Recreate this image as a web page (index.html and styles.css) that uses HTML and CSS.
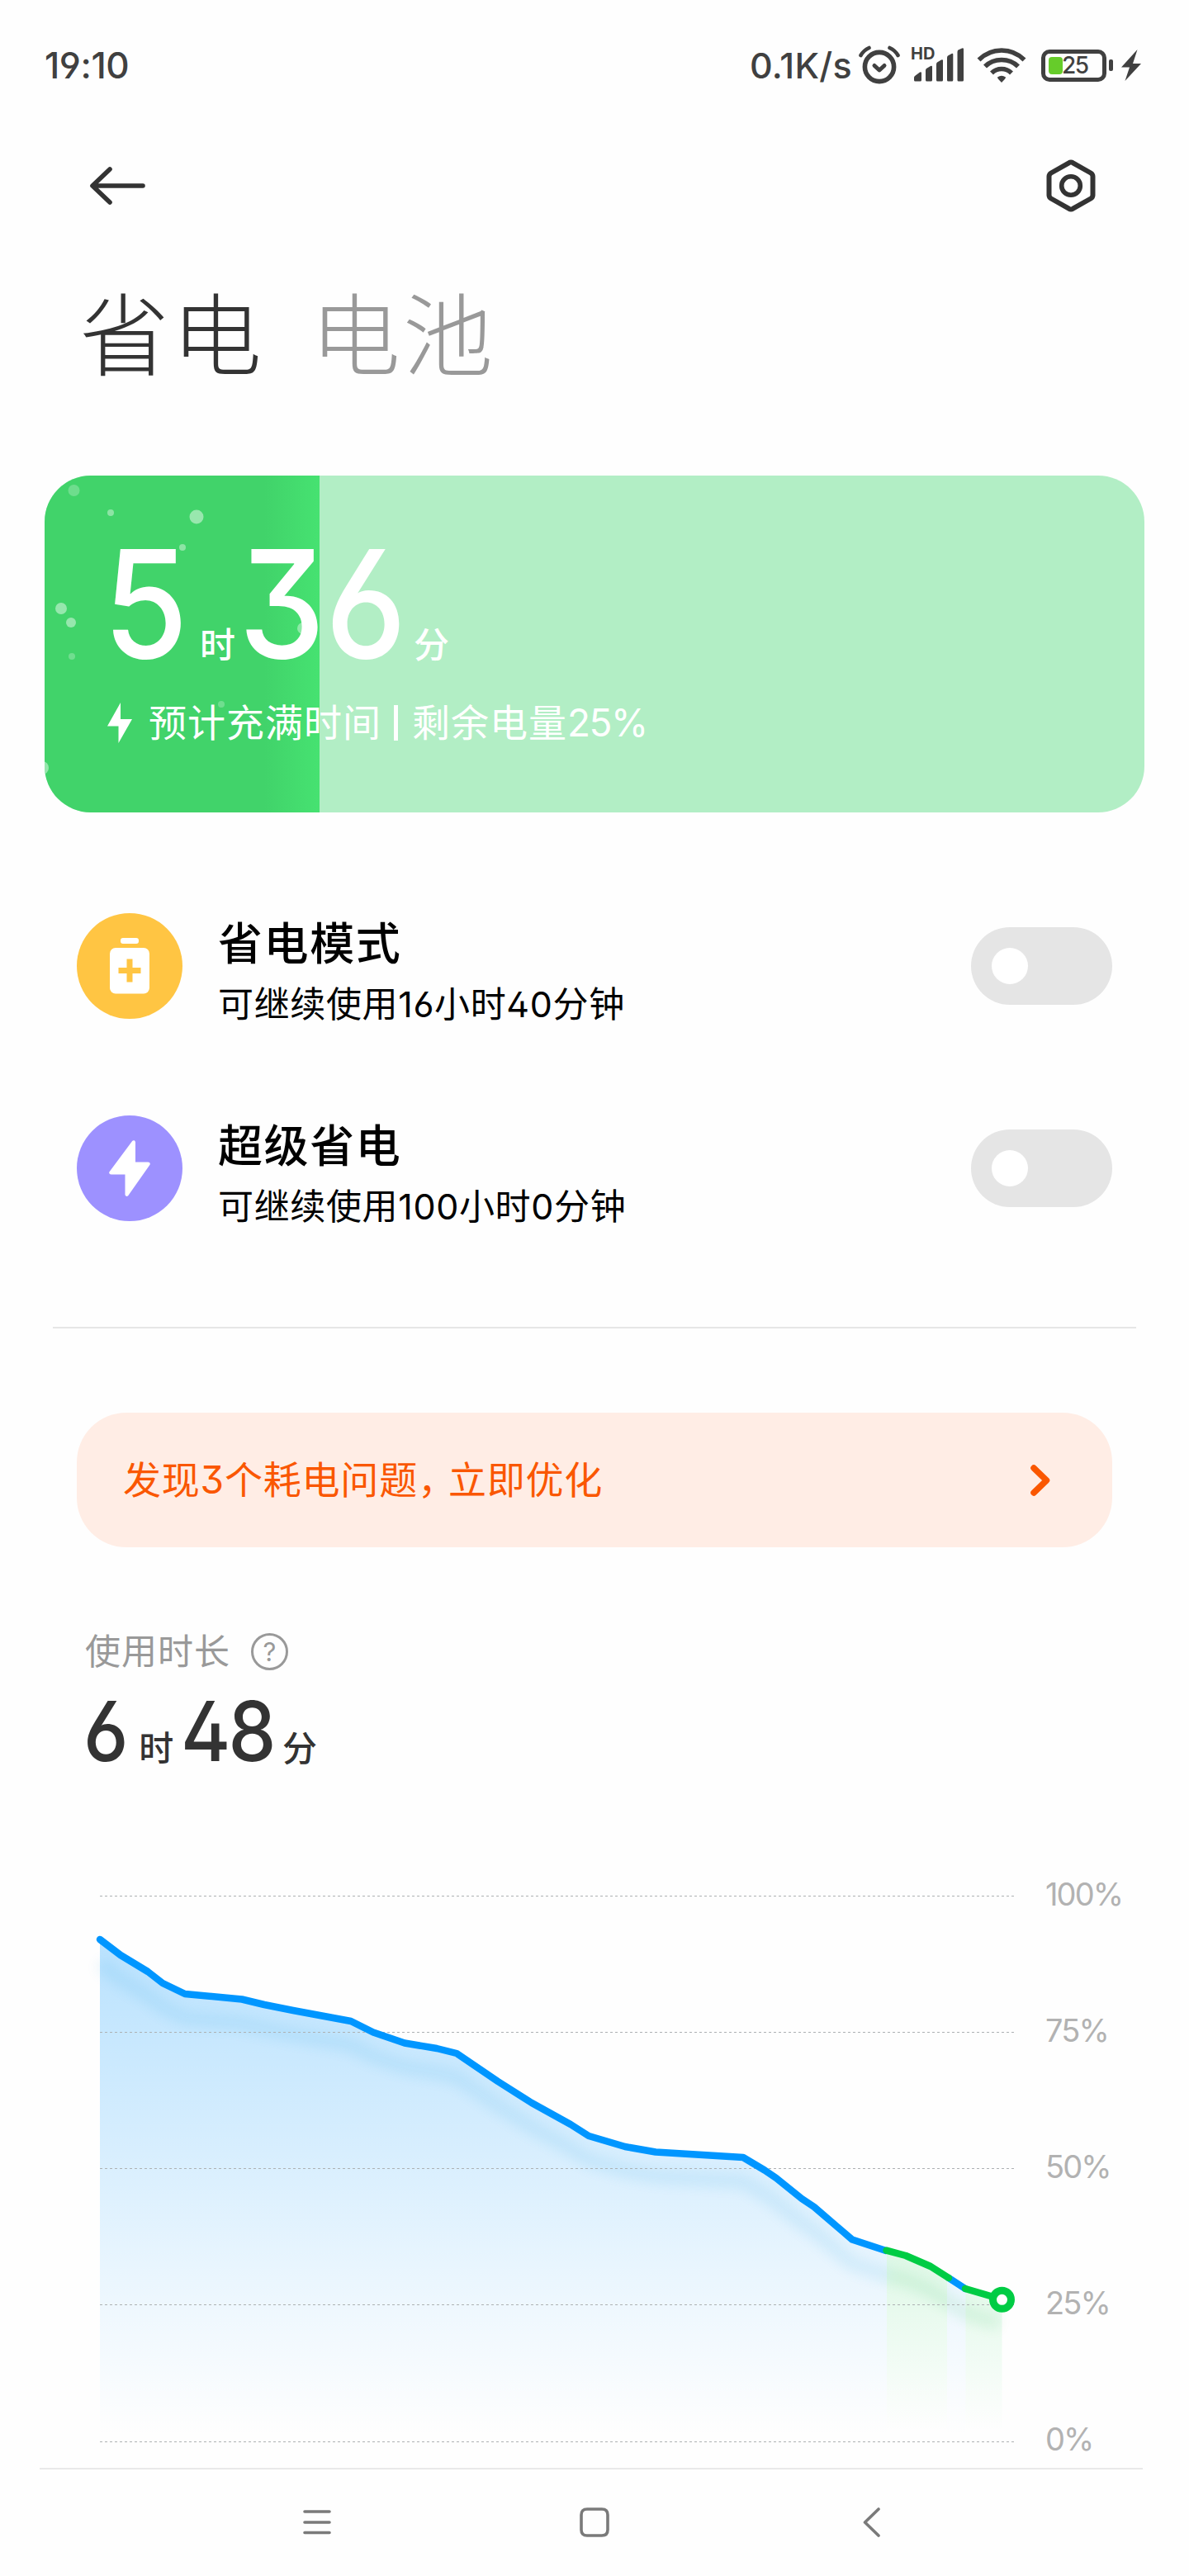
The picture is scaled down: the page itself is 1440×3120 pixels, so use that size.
FILE: index.html
```
<!DOCTYPE html>
<html lang="zh-CN">
<head>
  <meta charset="UTF-8" />
  <title>省电与电池</title>
  <link rel="stylesheet" href="styles.css">
</head>
<body>
  <div class="screen">
    <!-- 状态栏 -->
    <div class="status-bar">
      <div class="clock">19:10</div>
      <div class="status-right">
        <span class="speed">0.1K/s</span>
        <svg class="icon-alarm" width="50" height="48" viewBox="0 0 50 48" fill="none" stroke="#404040">
          <circle cx="25" cy="26" r="17.6" stroke-width="5.6"/>
          <path d="M19 24.5l6 5.500 6-5.500" stroke-width="5" stroke-linecap="round" stroke-linejoin="round"/>
          <path d="M2.500 12Q6 6 12.500 3M47.500 12Q44 6 37.500 3" stroke-width="4.6" stroke-linecap="round"/>
        </svg>
        <div class="signal">
          <span class="hd">HD</span>
          <svg width="64" height="42" viewBox="0 0 64 42" fill="#404040">
            <path d="M3 36q0-1 1-2l6-4.500q2-1 2 1v8.500q0 1.500-1.500 1.500H4.500q-1.500 0-1.500-1.500zM17 27.500q0-2 1-2.600l5-2.800q2-1 2 1V39q0 1.500-1.500 1.500h-5Q17 40.500 17 39zM30 20q0-2 1-2.600l5-2.800q2-1 2 1V39q0 1.500-1.500 1.500h-5Q30 40.500 30 39zM43 12q0-2 1-2.600l4.500-2.300q1.800-.8 1.800 1V39q0 1.500-1.500 1.500h-4.300Q43 40.500 43 39zM55.500 5q0-2 1-2.600l4.500-2Q63-.2 63 1.500V39q0 1.500-1.500 1.500H57Q55.500 40.500 55.500 39z"/>
          </svg>
        </div>
        <svg class="icon-wifi" width="60" height="44" viewBox="0 0 60 44" fill="none" stroke="#404040" stroke-width="5.600">
          <path d="M2.500 15.500Q14 4 30 4t27.500 11.500"/>
          <path d="M10 23.500Q18 15.500 30 15.500t20 8"/>
          <path d="M18 31.500q5-5 12-5t12 5"/>
          <path d="M25 36.500q5-3.500 10 0 .5 1-5 6.500-5.500-5.500-5-6.500z" fill="#404040" stroke="none"/>
        </svg>
        <div class="battery">
          <div class="battery-level"></div>
          <span class="battery-num">25</span>
        </div>
        <div class="battery-cap"></div>
        <svg class="icon-charge" width="24" height="38" viewBox="0 0 24 38" fill="#404040">
          <path d="M19.500 0L0 21.500h10L4.500 38 24 17H14z"/>
        </svg>
      </div>
    </div>

    <!-- 标题栏 -->
    <div class="nav-header">
      <svg width="68" height="50" viewBox="0 0 68 50" fill="none" stroke="#333" stroke-width="5.600" stroke-linecap="round" stroke-linejoin="round">
        <path d="M25 5L4 25l21 20M5 25h60"/>
      </svg>
      <svg width="60" height="64" viewBox="0 0 60 64" fill="none" stroke="#333" stroke-width="6" stroke-linejoin="round">
        <path d="M27.500 4.300q2.500-1.600 5 0l21.500 12.200q2.500 1.500 2.500 4.300v22.400q0 2.800-2.500 4.300L32.500 59.700q-2.500 1.600-5 0L6 47.500q-2.500-1.500-2.500-4.300V20.800q0-2.800 2.500-4.300z"/>
        <circle cx="30" cy="32" r="11.300" stroke-width="5.600"/>
      </svg>
    </div>

    <div class="tabs">
      <div class="tab active">省电</div>
      <div class="tab">电池</div>
    </div>

    <!-- 充电卡片 -->
    <div class="charge-card">
      <svg class="charge-fill" width="333" height="408" viewBox="0 0 333 408" fill="#fff">
        <circle cx="35.500" cy="18" r="7" opacity=".24"/>
        <circle cx="80" cy="45" r="4" opacity=".4"/>
        <circle cx="184" cy="50" r="8.500" opacity=".46"/>
        <circle cx="167" cy="87" r="4" opacity=".4"/>
        <circle cx="20" cy="161" r="7" opacity=".45"/>
        <circle cx="32" cy="178" r="6" opacity=".45"/>
        <circle cx="33" cy="219" r="4" opacity=".25"/>
        <circle cx="313" cy="185" r="7" opacity=".4"/>
        <circle cx="214" cy="277" r="4" opacity=".25"/>
        <circle cx="-3" cy="354" r="8" opacity=".45"/>
      </svg>
      <div class="charge-time">
        <span class="big">5</span><span class="unit">时</span><span class="big minutes">36</span><span class="unit last">分</span>
      </div>
      <div class="charge-info">
        <svg width="30" height="49" viewBox="0 0 30 49" fill="#fff"><path d="M16 0L0 28.500h13.500V49L30 20H16z"/></svg>
        <span>预计充满时间</span>
        <i class="bar"></i>
        <span>剩余电量<b class="percent">25%</b></span>
      </div>
    </div>

    <!-- 模式列表 -->
    <div class="mode-list">
      <div class="mode-item">
        <div class="mode-icon yellow">
          <svg width="48" height="68" viewBox="0 0 48 68">
            <rect x="13" y="0" width="22" height="7" rx="3" fill="#fff"/>
            <rect x="0" y="12" width="48" height="55.500" rx="7" fill="#fff"/>
            <path d="M24 29v21M14 39.500h20" stroke="#ffc543" stroke-width="7" stroke-linecap="square"/>
          </svg>
        </div>
        <div class="mode-text">
          <div class="mode-title">省电模式</div>
          <div class="mode-desc">可继续使用16小时40分钟</div>
        </div>
        <div class="switch"></div>
      </div>
      <div class="mode-item">
        <div class="mode-icon purple">
          <svg width="50" height="68" viewBox="0 0 50 68" fill="#fff" stroke="#fff" stroke-width="2" stroke-linejoin="round">
            <path d="M29 1.500L1.500 38.500q-1 2 1.500 2h17.500V66q.5 1.500 2 .5L48.500 29.500q1-2-1.500-2H31V2.500q-.5-2-2-1z"/>
          </svg>
        </div>
        <div class="mode-text">
          <div class="mode-title">超级省电</div>
          <div class="mode-desc">可继续使用100小时0分钟</div>
        </div>
        <div class="switch"></div>
      </div>
    </div>

    <div class="divider"></div>

    <div class="notice">
      <span class="notice-text">发现3个耗电问题<span class="comma">，</span>立即优化</span>
      <svg width="26" height="40" viewBox="0 0 26 40" fill="none" stroke="#fa5700" stroke-width="7.500" stroke-linecap="round" stroke-linejoin="round"><path d="M5 5l15.500 15L5 35"/></svg>
    </div>

    <!-- 使用时长 -->
    <div class="usage-label">
      <span>使用时长</span>
      <div class="help">?</div>
    </div>
    <div class="usage-time">
      <span class="num">6</span><span class="unit">时</span><span class="num n2">48</span><span class="unit last">分</span>
    </div>

    <!-- 电量曲线 -->
    <svg class="chart" width="1320" height="711" viewBox="60 2270 1320 711">
      <defs>
        <linearGradient id="blue" gradientUnits="userSpaceOnUse" x1="0" y1="2349" x2="0" y2="2950">
          <stop offset="0" stop-color="#0096ff" stop-opacity=".27"/>
          <stop offset=".4" stop-color="#0096ff" stop-opacity=".16"/>
          <stop offset=".75" stop-color="#0096ff" stop-opacity=".06"/>
          <stop offset="1" stop-color="#0096ff" stop-opacity="0"/>
        </linearGradient>
        <linearGradient id="green" gradientUnits="userSpaceOnUse" x1="0" y1="2725" x2="0" y2="2945">
          <stop offset="0" stop-color="#00d044" stop-opacity=".13"/>
          <stop offset="1" stop-color="#00d044" stop-opacity="0"/>
        </linearGradient>
        <filter id="soft" filterUnits="userSpaceOnUse" x="60" y="2270" width="1320" height="700">
          <feGaussianBlur stdDeviation="8"/>
        </filter>
      </defs>
      <path fill="url(#blue)" d="M121 2349L146 2368 179 2388 197 2402 224 2415 293 2421.500 320 2428 355 2435 425 2448 452 2461.500 490 2474.500 529 2481 553 2487 603 2521 644 2547 691 2573 713 2587 757 2600 794 2606.500 900 2613 926 2628.500 940 2638 971 2663 986 2673 1032 2712.500 1074 2726V2957H121zM1147 2758L1169.500 2772V2957H1147z"/>
      <path fill="url(#green)" d="M1074 2726L1097 2732 1127 2745 1147 2758V2957H1074zM1169.500 2772L1213.500 2785V2957H1169.500z"/>
      <g fill="none" stroke-width="16" opacity=".1" filter="url(#soft)" transform="translate(0 29)">
        <path stroke="#0090d8" d="M121 2349L146 2368 179 2388 197 2402 224 2415 293 2421.500 320 2428 355 2435 425 2448 452 2461.500 490 2474.500 529 2481 553 2487 603 2521 644 2547 691 2573 713 2587 757 2600 794 2606.500 900 2613 926 2628.500 940 2638 971 2663 986 2673 1032 2712.500 1073 2726"/>
        <path stroke="#00a838" d="M1073 2726L1097 2732 1127 2745 1149 2759 1169.500 2772 1210 2785"/>
      </g>
      <g stroke="#adb1b3" stroke-width="1.200" stroke-dasharray="3 3">
        <path d="M121 2296.500H1228M121 2461.500H1228M121 2626.500H1228M121 2791.500H1228M121 2957.500H1228"/>
      </g>
      <g fill="none" stroke-width="8.500" stroke-linecap="round" stroke-linejoin="round">
        <path stroke="#0096ff" d="M121 2349L146 2368 179 2388 197 2402 224 2415 293 2421.500 320 2428 355 2435 425 2448 452 2461.500 490 2474.500 529 2481 553 2487 603 2521 644 2547 691 2573 713 2587 757 2600 794 2606.500 900 2613 926 2628.500 940 2638 971 2663 986 2673 1032 2712.500 1073 2726M1149 2759L1169 2772"/>
        <path stroke="#00cc44" d="M1073.500 2725.700L1097 2732 1127 2745 1149 2759M1169 2772L1213.500 2785"/>
      </g>
      <circle cx="1213.500" cy="2785.300" r="11" fill="#fff" stroke="#00cc44" stroke-width="9"/>
      <g class="axis">
        <text x="1266" y="2308">100%</text>
        <text x="1266" y="2473">75%</text>
        <text x="1266" y="2638">50%</text>
        <text x="1266" y="2803">25%</text>
        <text x="1266" y="2968">0%</text>
      </g>
    </svg>

    <!-- 底部导航 -->
    <div class="bottom-nav">
      <svg width="36" height="40" viewBox="0 0 36 40" fill="none" stroke="#7a7a7a" stroke-width="3.600" stroke-linecap="round"><path d="M3 7h30M3 20h30M3 32.500h30"/></svg>
      <svg width="36" height="40" viewBox="0 0 36 40" fill="none" stroke="#7a7a7a" stroke-width="3.600"><path d="M9 4h18q7 0 7 7v18q0 7-7 7H9q-7 0-7-7V11q0-7 7-7z"/></svg>
      <svg width="36" height="40" viewBox="0 0 36 40" fill="none" stroke="#7a7a7a" stroke-width="3.600" stroke-linecap="round" stroke-linejoin="round"><path d="M26 4L9.500 20 26 36"/></svg>
    </div>
  </div>
</body>
</html>
```
FILE: styles.css
```
/* 全体 */
html, body {
  margin: 0;
  padding: 0;
  background: #fefefe;
  font-family: "Inter", "Noto Sans CJK SC", sans-serif;
  font-feature-settings: "ss01", "cv09";
}
.screen {
  width: 1440px;
  height: 3120px;
  overflow: hidden;
  display: flex;
  flex-direction: column;
}
svg {
  display: block;
  flex: none;
}
span {
  white-space: nowrap;
}

/* 状态栏 */
.status-bar {
  height: 158px;
  box-sizing: border-box;
  padding: 0 58px 0 54px;
  display: flex;
  align-items: center;
  justify-content: space-between;
  color: #404040;
}
.clock {
  font-size: 44px;
  font-weight: 500;
  letter-spacing: -0.4px;
}
.status-right {
  display: flex;
  align-items: center;
}
.speed {
  font-size: 43px;
  font-weight: 500;
  letter-spacing: 0.3px;
  margin-right: 8px;
}
.icon-alarm {
  margin-right: 14px;
}
.signal {
  position: relative;
  margin-right: 15px;
}
.hd {
  position: absolute;
  left: -1px;
  top: -3px;
  font-size: 20px;
  line-height: 20px;
  font-weight: 700;
}
.icon-wifi {
  margin-right: 18px;
}
.battery {
  width: 79px;
  height: 39px;
  box-sizing: border-box;
  border: 5px solid #404040;
  border-radius: 10px;
  padding: 4px;
  display: flex;
  align-items: center;
}
.battery-level {
  width: 17px;
  height: 21px;
  border-radius: 4px;
  background: #66cc2a;
}
.battery-num {
  font-size: 28px;
  line-height: 28px;
  font-weight: 500;
  letter-spacing: -1.5px;
  margin-left: -1px;
}
.battery-cap {
  width: 5px;
  height: 14px;
  border-radius: 2px;
  background: #404040;
  margin: 0 10px 0 3px;
}

/* 标题栏 */
.nav-header {
  height: 134px;
  padding: 0 113px 0 108px;
  display: flex;
  align-items: center;
  justify-content: space-between;
}
.tabs {
  display: flex;
  gap: 56px;
  height: 226px;
  padding: 61px 0 0 96px;
  box-sizing: border-box;
}
.tab {
  font-size: 109px;
  line-height: 108px;
  font-weight: 300;
  letter-spacing: 3px;
  color: #999;
}
.tab.active {
  color: #333;
}

/* 充电卡片 */
.charge-card {
  position: relative;
  height: 408px;
  margin: 58px 54px 0;
  box-sizing: border-box;
  padding: 66px 0 0 76px;
  border-radius: 56px;
  overflow: hidden;
  background: #b2eec5;
  color: #fff;
}
.charge-fill {
  position: absolute;
  left: 0;
  top: 0;
  background: linear-gradient(to right, #41d36a 0, #41d36a 80%, #46e271 100%);
}
.charge-time {
  position: relative;
  display: flex;
  align-items: baseline;
  height: 180px;
}
.charge-time .big {
  font-size: 181px;
  line-height: 180px;
  font-weight: 450;
  transform: scaleX(0.92);
  transform-origin: left;
  margin: 0 5px 0 -5px;
}
.charge-time .minutes {
  margin: 0 -9px 0 4px;
}
.charge-time .unit {
  font-size: 43px;
  font-weight: 500;
}
.charge-info {
  position: relative;
  display: flex;
  align-items: center;
  height: 60px;
  margin-top: 23px;
  font-size: 46px;
  line-height: 60px;
  letter-spacing: 1px;
}
.charge-info svg {
  margin-right: 20px;
}
.charge-info .bar {
  width: 5px;
  height: 43px;
  background: #fff;
  margin: 0 17px 0 15px;
}
.percent {
  font-weight: 400;
  letter-spacing: -1.5px;
}

/* 模式列表 */
.mode-list {
  display: flex;
  flex-direction: column;
  gap: 117px;
  padding: 122px 93px 0;
}
.mode-item {
  display: flex;
  height: 128px;
}
.mode-icon {
  width: 128px;
  height: 128px;
  border-radius: 50%;
  display: flex;
  align-items: center;
  justify-content: center;
}
.yellow { background: #ffc543; }
.purple { background: #9d91ff; }
.mode-text {
  flex: 1;
  padding: 8px 0 0 43px;
  color: #000;
}
.mode-title {
  font-size: 54px;
  line-height: 60px;
  font-weight: 500;
  letter-spacing: 1.6px;
}
.mode-desc {
  font-size: 43px;
  line-height: 60px;
  margin-top: 12px;
  letter-spacing: 0.65px;
}
.switch {
  width: 171px;
  height: 94px;
  box-sizing: border-box;
  padding: 25px;
  margin-top: 17px;
  border-radius: 47px;
  background: #e5e5e5;
}
.switch::before {
  content: "";
  display: block;
  width: 44px;
  height: 44px;
  border-radius: 50%;
  background: #fff;
}
.divider {
  height: 2px;
  margin: 128px 64px 0;
  background: #e6e6e6;
}

/* 耗电提示 */
.notice {
  height: 163px;
  margin: 102px 93px 0;
  box-sizing: border-box;
  padding: 0 74px 0 56px;
  border-radius: 60px;
  background: #ffede5;
  color: #fa5700;
  font-size: 46px;
  letter-spacing: 0.8px;
  display: flex;
  align-items: center;
  justify-content: space-between;
}
.notice-text {
  line-height: 60px;
  padding-bottom: 2px;
}
.comma {
  letter-spacing: -9px;
}

/* 使用时长 */
.usage-label {
  display: flex;
  align-items: center;
  height: 60px;
  margin: 96px 0 0 103px;
  color: #999;
  font-size: 43px;
  line-height: 60px;
  letter-spacing: 1px;
}
.help {
  width: 45px;
  height: 45px;
  box-sizing: border-box;
  border: 3px solid #999;
  border-radius: 50%;
  margin-left: 25px;
  font-size: 31px;
  line-height: 39px;
  text-align: center;
  letter-spacing: 0;
}
.usage-time {
  display: flex;
  align-items: baseline;
  height: 100px;
  margin: 17px 0 0 101px;
  color: #333;
}
.usage-time .num {
  font-size: 100px;
  line-height: 100px;
  font-weight: 450;
  transform: scaleX(0.92);
  transform-origin: left;
  margin: 0 8px 0 0;
}
.usage-time .n2 {
  letter-spacing: -3px;
  margin: 0 0 0 9px;
}
.usage-time .unit {
  font-size: 42px;
  font-weight: 500;
}

/* 电量曲线 */
.chart {
  margin: 123px 0 0 60px;
}
.axis text {
  font-size: 38px;
  letter-spacing: -1.9px;
  fill: #b2b2b2;
}

/* 底部导航 */
.bottom-nav {
  display: flex;
  justify-content: space-between;
  padding: 44px 310px 0 318px;
  margin: 8px 56px 0 48px;
  border-top: 2px solid #e9e9e9;
}
```
